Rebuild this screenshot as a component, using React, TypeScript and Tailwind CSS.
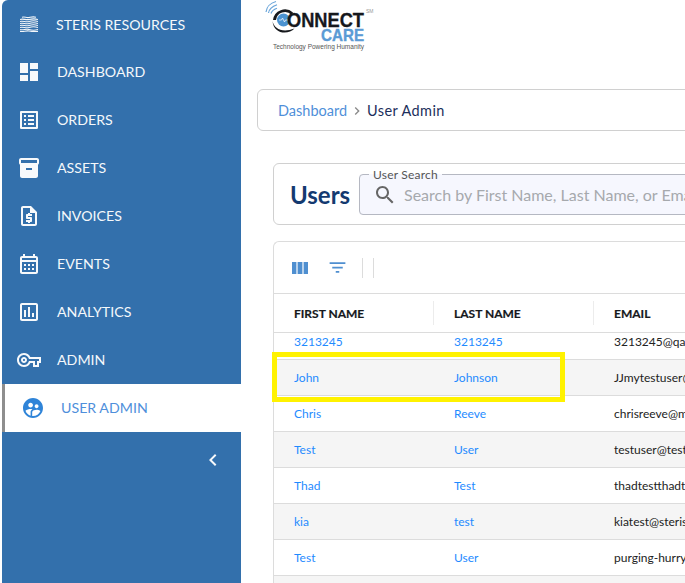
const navItems = [
  { label: "STERIS RESOURCES", icon: "waves" },
  { label: "DASHBOARD", icon: "M3 13h8V3H3v10zm0 8h8v-6H3v6zm10 0h8V11h-8v10zm0-18v6h8V3h-8z" },
  { label: "ORDERS", icon: "M19 5v14H5V5h14m1.1-2H3.9c-.5 0-.9.4-.9.9v16.2c0 .4.4.9.9.9h16.2c.4 0 .9-.5.9-.9V3.9c0-.5-.5-.9-.9-.9zM11 7h6v2h-6V7zm0 4h6v2h-6v-2zm0 4h6v2h-6zM7 7h2v2H7zm0 4h2v2H7zm0 4h2v2H7z" },
  { label: "ASSETS", icon: "M20 2H4c-1 0-2 .9-2 2v3.01c0 .72.43 1.34 1 1.69V20c0 1.1 1.1 2 2 2h14c.9 0 2-.9 2-2V8.7c.57-.35 1-.97 1-1.69V4c0-1.1-1-2-2-2zm-5 12H9v-2h6v2zm5-7H4V4l16-.02V7z" },
  { label: "INVOICES", icon: "M14 2H6c-1.1 0-2 .9-2 2v16c0 1.1.9 2 2 2h12c1.1 0 2-.9 2-2V8l-6-6zm4 18H6V4h7v5h5v11zM11 19h2v-1h1c.55 0 1-.45 1-1v-3c0-.55-.45-1-1-1h-3v-1h4v-2h-2V9h-2v1h-1c-.55 0-1 .45-1 1v3c0 .55.45 1 1 1h3v1H9v2h2v1z" },
  { label: "EVENTS", icon: "M19 4h-1V2h-2v2H8V2H6v2H5c-1.1 0-2 .9-2 2v14c0 1.1.9 2 2 2h14c1.1 0 2-.9 2-2V6c0-1.1-.9-2-2-2zm0 16H5V10h14v10zM9 14H7v-2h2v2zm4 0h-2v-2h2v2zm4 0h-2v-2h2v2zm-8 4H7v-2h2v2zm4 0h-2v-2h2v2zm4 0h-2v-2h2v2zM5 6h14v2H5z" },
  { label: "ANALYTICS", icon: "M19 3H5c-1.1 0-2 .9-2 2v14c0 1.1.9 2 2 2h14c1.1 0 2-.9 2-2V5c0-1.1-.9-2-2-2zm0 16H5V5h14v14zM7 10h2v7H7zm4-3h2v10h-2zm4 6h2v4h-2z" },
  { label: "ADMIN", icon: "M22 19h-6v-4h-2.68c-1.14 2.42-3.6 4-6.32 4-3.86 0-7-3.14-7-7s3.14-7 7-7c2.72 0 5.17 1.58 6.32 4H24v6h-2v4zm-4-2h2v-4h2v-2H11.94l-.23-.67C11.01 8.34 9.11 7 7 7c-2.76 0-5 2.24-5 5s2.24 5 5 5c2.11 0 4.01-1.34 4.71-3.33l.23-.67H18v4zM7 15c-1.65 0-3-1.35-3-3s1.35-3 3-3 3 1.35 3 3-1.35 3-3 3zm0-4c-.55 0-1 .45-1 1s.45 1 1 1 1-.45 1-1-.45-1-1-1z" },
];

const rows = [
  { first: "John", last: "Johnson", email: "JJmytestuser@qa.steris.com" },
  { first: "Chris", last: "Reeve", email: "chrisreeve@mailinator.com" },
  { first: "Test", last: "User", email: "testuser@testing.com" },
  { first: "Thad", last: "Test", email: "thadtestthadtest@qa.com" },
  { first: "kia", last: "test", email: "kiatest@steris.com" },
  { first: "Test", last: "User", email: "purging-hurry@qa.com" },
];

function NavIcon({ icon }: { icon: string }) {
  if (icon === "waves") {
    return (
      <svg viewBox="0 0 18 16" className="h-4 w-[18px]" fill="none" stroke="#f4f7fa" strokeWidth="1.1">
        <path d="M2 1.2c3-1 4 .9 7 .3s4-1 7-.3" />
        <path d="M0 3.5c3-1.200 6 .8 9 0s6-1 9 0" />
        <path d="M0 5.500c3-1 6 1 9 0s6-1 9 0" />
        <path d="M0 7.500c3-1 6 1 9 0s6-1 9 0" />
        <path d="M0 9.500c3-1 6 1 9 0s6-1 9 0" />
        <path d="M0 11.500c3-1 6 1 9 0s6-1 9 0" />
        <path d="M0 13.500c3 1 6-1 9 0s6 1 9 0" />
        <path d="M0 15.400c3 .8 6-1 9-.4s6 1 9 .4" />
      </svg>
    );
  }
  return (
    <svg viewBox="0 0 24 24" className="h-6 w-6" fill="#f7f9fb">
      <path d={icon} />
    </svg>
  );
}

function Sidebar() {
  return (
    <aside className="flex h-full w-[241px] shrink-0 flex-col overflow-hidden bg-white pl-[2px]">
      <div className="flex h-full flex-col rounded-tl-md bg-[#3370ac]">
        {navItems.map((item) => (
          <div key={item.label} className="flex h-12 items-center pl-[15px] text-[14.2px] text-[#f5f8fb]">
            <span className="flex w-6 justify-center">
              <NavIcon icon={item.icon} />
            </span>
            <span className={item.label === "STERIS RESOURCES" ? "ml-[15px] pt-px" : "ml-4"}>{item.label}</span>
          </div>
        ))}
        <div className="flex h-12 items-center border-l-[3px] border-[#8e8e8e] bg-white pl-4 text-[14.2px] text-[#4f8fdb]">
          <svg viewBox="0 0 24 24" className="h-6 w-6" fill="#2f84d8">
            <path d="M11.99 2c-5.52 0-10 4.48-10 10s4.48 10 10 10 10-4.48 10-10-4.48-10-10-10zm3.61 6.34c1.07 0 1.93.86 1.93 1.93 0 1.07-.86 1.93-1.93 1.93-1.07 0-1.93-.86-1.93-1.93-.01-1.07.86-1.93 1.93-1.93zm-6-1.58c1.3 0 2.36 1.06 2.36 2.36 0 1.3-1.06 2.36-2.36 2.36s-2.36-1.06-2.36-2.36c0-1.31 1.05-2.36 2.36-2.36zm0 9.13v3.75c-2.4-.75-4.3-2.6-5.14-4.96 1.05-1.12 3.67-1.69 5.14-1.69.53 0 1.2.08 1.9.22-1.64.87-1.9 2.02-1.9 2.68zM11.99 20c-.27 0-.53-.01-.79-.04v-4.07c0-1.42 2.94-2.13 4.4-2.13 1.07 0 2.92.39 3.84 1.15-1.17 2.97-4.06 5.09-7.45 5.09z" />
          </svg>
          <span className="ml-4">USER ADMIN</span>
        </div>
        <div className="flex h-[56px] items-center justify-end pr-4">
          <svg viewBox="0 0 24 24" className="h-6 w-6" fill="#f7f9fb">
            <path d="M15.41 7.41L14 6l-6 6 6 6 1.41-1.41L10.83 12z" />
          </svg>
        </div>
      </div>
    </aside>
  );
}

function Logo() {
  return (
    <svg viewBox="0 0 112 52" className="ml-[8px] h-[52px] w-[112px] shrink-0">
      <g fill="none" stroke="#6aa5da" strokeWidth="1.2">
        <path d="M1 12C1.500 7.500 5 3 11 1.500" />
        <path d="M3.500 13C4 10 7 6.500 12 4.800" />
        <path d="M6 13.500C6.500 11.500 8.500 9.500 12 8.200" />
      </g>
      <path d="M28 12.500a12 12 0 0 0-20 7.500h3a9 9 0 0 1 15.500-5z" fill="#16181c" />
      <circle cx="18.500" cy="20" r="6.500" fill="#4b93d1" />
      <path d="M14 20h2.500l1-2 2 4 1-2h2.500" fill="none" stroke="#fff" strokeWidth=".7" />
      <path d="M7.500 21c1.500 8 10 12 22 7.500-6 6.500-21 6-22-7.500z" fill="#16181c" />
      <text x="22" y="27" textLength="77" lengthAdjust="spacingAndGlyphs" stroke="#16181c" strokeWidth=".3" className="fill-[#16181c] text-[19.500px] font-bold [font-family:'Liberation_Sans',sans-serif]">ONNECT</text>
      <text x="56" y="41" textLength="43" lengthAdjust="spacingAndGlyphs" stroke="#5b9bd5" strokeWidth=".4" className="fill-[#5b9bd5] text-[17px] font-bold [font-family:'Liberation_Sans',sans-serif]">CARE</text>
      <text x="8" y="49" textLength="91" lengthAdjust="spacingAndGlyphs" className="fill-[#555] text-[6.500px] [font-family:'Liberation_Sans',sans-serif]">Technology Powering Humanity</text>
      <text x="101" y="13" className="fill-[#999] text-[5px] [font-family:'Liberation_Sans',sans-serif]">SM</text>
    </svg>
  );
}

function UsersTable() {
  return (
    <div className="mt-4 w-[600px] rounded-tl-md border-t border-l border-[#dcdcdc]">
      <div className="flex h-[52px] items-center border-b border-[#dcdcdc] pl-[14px]">
        <svg viewBox="0 0 24 24" className="h-6 w-6" fill="#4f8fd0">
          <path d="M4 6h4.400v12H4zM9.600 6h4.800v12H9.600zM15.600 6H20v12h-4.400z" />
        </svg>
        <svg viewBox="0 0 24 24" className="ml-[15px] h-[21px] w-[21px]" fill="#4f8fd0">
          <path d="M10 18h4v-2h-4v2zM3 6v2h18V6H3zm3 7h12v-2H6v2z" />
        </svg>
        <span className="ml-[14px] h-5 w-px bg-[#dcdcdc]" />
        <span className="ml-[10px] h-5 w-px bg-[#dcdcdc]" />
      </div>
      <div className="flex h-[39px] items-center border-b border-[#dcdcdc] text-[12px] font-bold text-[#16181c] [-webkit-text-stroke:0.2px_#16181c]">
        <div className="flex h-6 w-[160px] items-center border-r border-[#ececec] pl-5 pt-[2px]">FIRST NAME</div>
        <div className="flex h-6 w-[160px] items-center border-r border-[#ececec] pl-5 pt-[2px]">LAST NAME</div>
        <div className="flex h-6 items-center pl-5 pt-[2px]">EMAIL</div>
      </div>
      <div className="flex h-[27px] items-end overflow-hidden border-b border-[#dcdcdc] text-[12px] leading-[35px]">
        <div className="w-[160px] pl-5 text-[#1f8bff]">3213245</div>
        <div className="w-[160px] pl-5 text-[#1f8bff]">3213245</div>
        <div className="whitespace-nowrap pl-5 text-[#222]">3213245@qa.steris.com</div>
      </div>
      {rows.map((row, i) => (
        <div key={i} className={`flex h-9 items-center border-b border-[#dcdcdc] text-[12px] ${i % 2 === 0 ? "bg-[#f5f5f5]" : "bg-white"}`}>
          <div className="w-[160px] pl-5 text-[#1f8bff]">{row.first}</div>
          <div className="w-[160px] pl-5 text-[#1f8bff]">{row.last}</div>
          <div className="whitespace-nowrap pl-5 text-[#222]">{row.email}</div>
        </div>
      ))}
      <div className="h-9 bg-[#f5f5f5]" />
    </div>
  );
}

export default function App() {
  return (
    <div className="relative flex h-[583px] w-[685px] overflow-hidden bg-white [font-family:Lato,sans-serif]">
      <Sidebar />
      <main className="flex min-w-0 flex-1 flex-col overflow-hidden pl-4">
        <Logo />
        <div className="mt-[37px] flex h-[42px] w-[600px] shrink-0 items-center rounded-l-md border border-[#d0d0d0] pl-5 pt-[2px] text-[14.500px]">
          <span className="text-[#4f8fd9]">Dashboard</span>
          <svg viewBox="0 0 24 24" className="mx-[2px] h-4 w-4" fill="#8a8a8a">
            <path d="M10 6L8.590 7.410 13.170 12l-4.580 4.590L10 18l6-6z" />
          </svg>
          <span className="tracking-[0.4px] text-[#1c2f5c]">User Admin</span>
        </div>
        <div className="ml-4 mt-[32px] flex h-[62px] w-[600px] shrink-0 items-center rounded-tl-md rounded-bl-md border border-[#d0d0d0] pl-4">
          <h1 className="w-[60px] pt-[2px] text-[24px] font-bold leading-none text-[#143a70]">Users</h1>
          <fieldset className="-mt-[5px] ml-[9px] h-[46px] flex-1 rounded-l border border-[#b5b8c2] bg-[#f6f7fe] pl-[9px]">
            <legend className="px-1 text-[12px] leading-[12px] tracking-[0.2px] text-[#555]">User Search</legend>
            <div className="ml-1 flex h-[28px] items-center text-[16px] text-[#a6a9ad]">
              <svg viewBox="0 0 24 24" className="h-6 w-6" fill="#666">
                <path d="M15.500 14h-.790l-.280-.270C15.410 12.590 16 11.110 16 9.500 16 5.910 13.090 3 9.500 3S3 5.910 3 9.500 5.910 16 9.500 16c1.610 0 3.090-.590 4.230-1.570l.270.280v.790l5 4.990L20.490 19l-4.990-5zm-6 0C7.010 14 5 11.990 5 9.500S7.010 5 9.500 5 14 7.010 14 9.500 11.990 14 9.500 14z" />
              </svg>
              <span className="ml-[7px] whitespace-nowrap">Search by First Name, Last Name, or Email</span>
            </div>
          </fieldset>
        </div>
        <div className="ml-4 shrink-0">
          <UsersTable />
        </div>
      </main>
      <div className="absolute left-[272px] top-[352px] h-[50px] w-[293px] border-[5px] border-[#fff200]" />
    </div>
  );
}
